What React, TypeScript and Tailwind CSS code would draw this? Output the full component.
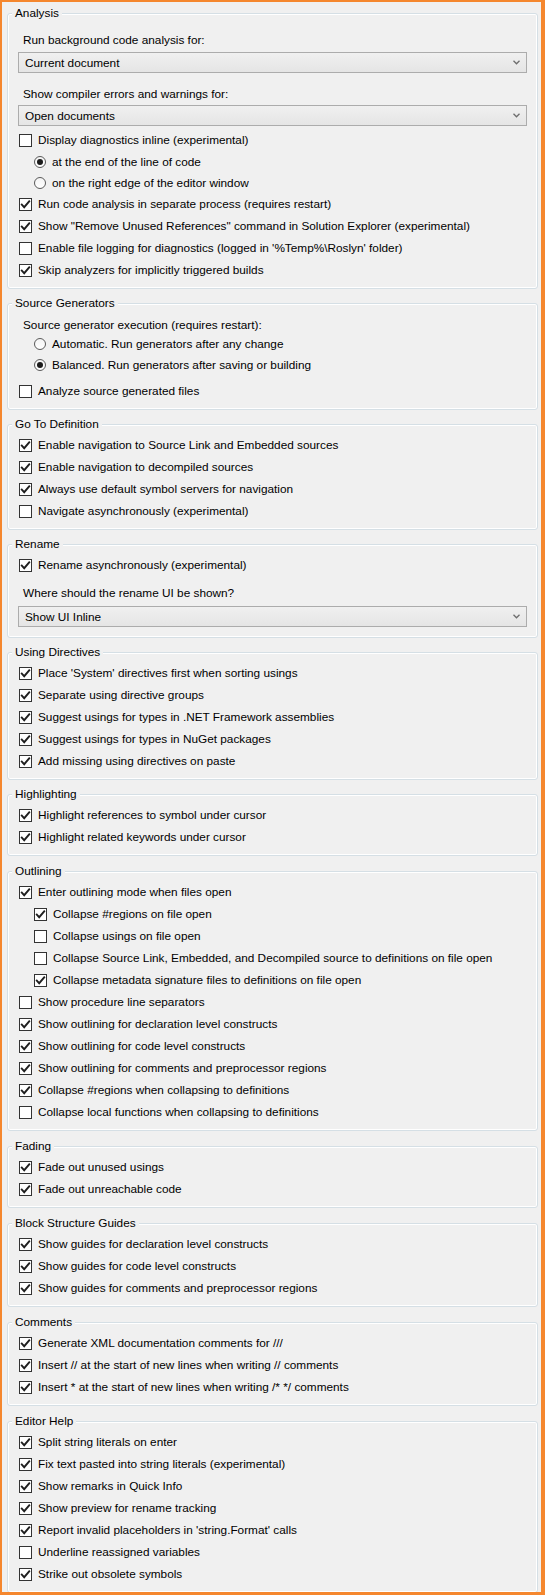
import React from "react";

type Item =
  | { kind: "check"; label: string; checked: boolean; indent?: boolean }
  | { kind: "radio"; label: string; checked: boolean };

function CheckBox({ checked }: { checked: boolean }) {
  return (
    <span className="flex h-[13px] w-[13px] shrink-0 items-center justify-center border border-[#333333] bg-white">
      {checked && (
        <svg width="11" height="11" viewBox="0 0 11 11">
          <path d="M1.8 5.6 L4.2 8.2 L9.2 2.4" fill="none" stroke="#1f1f1f" strokeWidth="1.9" strokeLinecap="square" strokeLinejoin="miter" />
        </svg>
      )}
    </span>
  );
}

function Radio({ checked }: { checked: boolean }) {
  return (
    <span className="flex h-[12px] w-[12px] shrink-0 items-center justify-center rounded-full border border-[#5a5a5a] bg-gradient-to-b from-[#f4f4f4] to-[#ffffff]">
      {checked && <span className="h-[6px] w-[6px] rounded-full bg-[#1a1a1a]" />}
    </span>
  );
}

function CheckRow({ label, checked, indent }: { label: string; checked: boolean; indent?: boolean }) {
  return (
    <div className={indent ? "flex h-[22px] items-center pl-[26px]" : "flex h-[22px] items-center pl-[11px]"}>
      <CheckBox checked={checked} />
      <span className="ml-[6px] whitespace-nowrap">{label}</span>
    </div>
  );
}

function RadioRow({ label, checked }: { label: string; checked: boolean }) {
  return (
    <div className="flex h-[21px] items-center pl-[26px]">
      <Radio checked={checked} />
      <span className="ml-[6px] whitespace-nowrap">{label}</span>
    </div>
  );
}

function Rows({ items }: { items: Item[] }) {
  return (
    <>
      {items.map((it, i) =>
        it.kind === "check" ? (
          <CheckRow key={i} label={it.label} checked={it.checked} indent={it.indent} />
        ) : (
          <RadioRow key={i} label={it.label} checked={it.checked} />
        )
      )}
    </>
  );
}

function Dropdown({ value }: { value: string }) {
  return (
    <div className="mx-[10px] flex h-[21px] items-center justify-between border border-[#acacac] bg-gradient-to-b from-[#f0f0f0] to-[#e5e5e5] pl-[6px] pr-[6px]">
      <span className="whitespace-nowrap">{value}</span>
      <svg width="7" height="5" viewBox="0 0 7 5">
        <path d="M0.5 0.8 L3.5 3.8 L6.5 0.8" fill="none" stroke="#6d6d6d" strokeWidth="1.3" />
      </svg>
    </div>
  );
}

function Label({ text, className }: { text: string; className: string }) {
  return <div className={className}>{text}</div>;
}

function Group({
  title,
  gap,
  pb,
  children,
}: {
  title: string;
  gap?: "first" | "wide";
  pb?: string;
  children: React.ReactNode;
}) {
  const base =
    "relative ml-[5px] mr-[3px] rounded-[3px] border border-[#d5dfe5] shadow-[inset_0_0_0_1px_#ffffff] pt-[9px]";
  const mt = gap === "first" ? " mt-[11px]" : gap === "wide" ? " mt-[15px]" : " mt-[14px]";
  const bottom = pb === "lg" ? " pb-[10px]" : " pb-[7px]";
  return (
    <div className={base + mt + bottom}>
      <div className="absolute left-[4px] top-[-9px] h-[16px] whitespace-nowrap bg-[#f0f0f0] px-[3px] leading-[16px]">
        {title}
      </div>
      {children}
    </div>
  );
}

const c = (label: string, checked: boolean, indent?: boolean): Item => ({ kind: "check", label, checked, indent });
const r = (label: string, checked: boolean): Item => ({ kind: "radio", label, checked });

export default function App() {
  return (
    <div className="box-border h-[1595px] w-[545px] overflow-hidden border-t-2 border-l-2 border-r-[4px] border-b-[3px] border-[#f5872e] bg-[#f0f0f0] text-[11.8px] leading-[16px] text-black font-[family-name:Liberation_Sans,Arial,sans-serif]">
      <Group title="Analysis" gap="first">
        <Label text="Run background code analysis for:" className="mt-[9px] h-[16px] pl-[15px]" />
        <div className="mt-[4px]">
          <Dropdown value="Current document" />
        </div>
        <Label text="Show compiler errors and warnings for:" className="mt-[13px] h-[16px] pl-[15px]" />
        <div className="mt-[3px]">
          <Dropdown value="Open documents" />
        </div>
        <div className="mt-[3px]">
          <Rows
            items={[
              c("Display diagnostics inline (experimental)", false),
              r("at the end of the line of code", true),
              r("on the right edge of the editor window", false),
              c("Run code analysis in separate process (requires restart)", true),
              c('Show "Remove Unused References" command in Solution Explorer (experimental)', true),
              c("Enable file logging for diagnostics (logged in '%Temp%\\Roslyn' folder)", false),
              c("Skip analyzers for implicitly triggered builds", true),
            ]}
          />
        </div>
      </Group>

      <Group title="Source Generators">
        <Label text="Source generator execution (requires restart):" className="mt-[4px] h-[16px] pl-[15px]" />
        <Rows
          items={[
            r("Automatic. Run generators after any change", false),
            r("Balanced. Run generators after saving or building", true),
          ]}
        />
        <div className="mt-[5px]">
          <Rows items={[c("Analyze source generated files", false)]} />
        </div>
      </Group>

      <Group title="Go To Definition">
        <Rows
          items={[
            c("Enable navigation to Source Link and Embedded sources", true),
            c("Enable navigation to decompiled sources", true),
            c("Always use default symbol servers for navigation", true),
            c("Navigate asynchronously (experimental)", false),
          ]}
        />
      </Group>

      <Group title="Rename" pb="lg">
        <Rows items={[c("Rename asynchronously (experimental)", true)]} />
        <Label text="Where should the rename UI be shown?" className="mt-[9px] h-[16px] pl-[15px]" />
        <div className="mt-[5px]">
          <Dropdown value="Show UI Inline" />
        </div>
      </Group>

      <Group title="Using Directives">
        <Rows
          items={[
            c("Place 'System' directives first when sorting usings", true),
            c("Separate using directive groups", true),
            c("Suggest usings for types in .NET Framework assemblies", true),
            c("Suggest usings for types in NuGet packages", true),
            c("Add missing using directives on paste", true),
          ]}
        />
      </Group>

      <Group title="Highlighting">
        <Rows
          items={[
            c("Highlight references to symbol under cursor", true),
            c("Highlight related keywords under cursor", true),
          ]}
        />
      </Group>

      <Group title="Outlining" gap="wide">
        <Rows
          items={[
            c("Enter outlining mode when files open", true),
            c("Collapse #regions on file open", true, true),
            c("Collapse usings on file open", false, true),
            c("Collapse Source Link, Embedded, and Decompiled source to definitions on file open", false, true),
            c("Collapse metadata signature files to definitions on file open", true, true),
            c("Show procedure line separators", false),
            c("Show outlining for declaration level constructs", true),
            c("Show outlining for code level constructs", true),
            c("Show outlining for comments and preprocessor regions", true),
            c("Collapse #regions when collapsing to definitions", true),
            c("Collapse local functions when collapsing to definitions", false),
          ]}
        />
      </Group>

      <Group title="Fading" gap="wide">
        <Rows
          items={[c("Fade out unused usings", true), c("Fade out unreachable code", true)]}
        />
      </Group>

      <Group title="Block Structure Guides" gap="wide">
        <Rows
          items={[
            c("Show guides for declaration level constructs", true),
            c("Show guides for code level constructs", true),
            c("Show guides for comments and preprocessor regions", true),
          ]}
        />
      </Group>

      <Group title="Comments" gap="wide">
        <Rows
          items={[
            c("Generate XML documentation comments for ///", true),
            c("Insert // at the start of new lines when writing // comments", true),
            c("Insert * at the start of new lines when writing /* */ comments", true),
          ]}
        />
      </Group>

      <Group title="Editor Help" gap="wide">
        <Rows
          items={[
            c("Split string literals on enter", true),
            c("Fix text pasted into string literals (experimental)", true),
            c("Show remarks in Quick Info", true),
            c("Show preview for rename tracking", true),
            c("Report invalid placeholders in 'string.Format' calls", true),
            c("Underline reassigned variables", false),
            c("Strike out obsolete symbols", true),
          ]}
        />
      </Group>
    </div>
  );
}
